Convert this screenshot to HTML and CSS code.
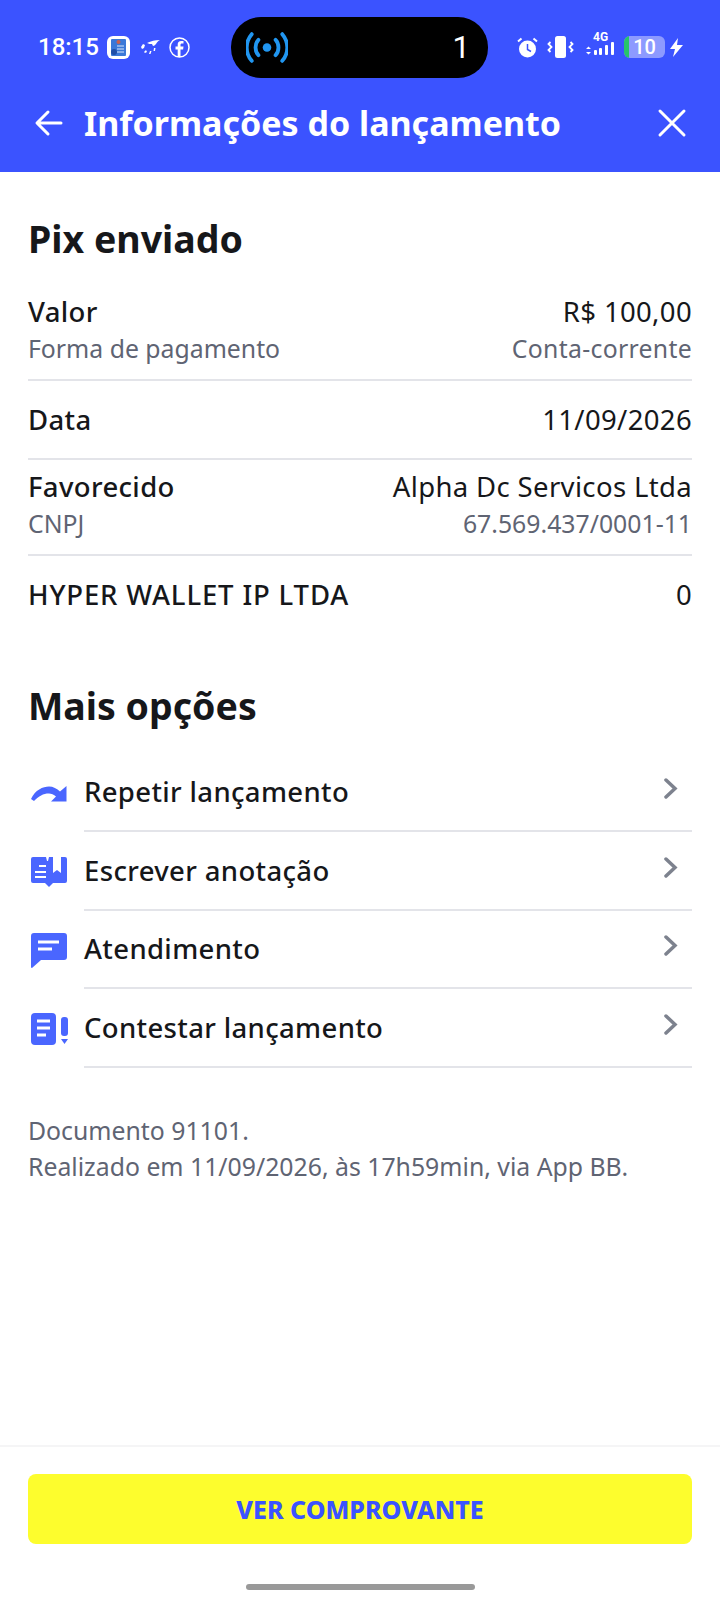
FILE: index.html
```html
<!DOCTYPE html>
<html lang="pt-BR">
<head>
    <meta charset="UTF-8">
    <meta name="viewport" content="width=device-width, initial-scale=1.0">
    <title>Informações do lançamento</title>
    <link rel="stylesheet" href="styles.css">
</head>
<body>
    <div class="tela">
        <header class="topo">
            <div class="status">
                <div class="status-esq">
                    <span class="hora">18:15</span>
                    <svg class="app-icone" width="23" height="23" viewBox="0 0 23 23">
                        <rect width="23" height="23" rx="6" fill="#fff"/>
                        <rect x="4" y="3" width="15" height="17" rx="1" fill="#3a78d8"/>
                        <circle cx="11.500" cy="6" r="2" fill="#c9604f"/>
                        <path d="M10 10h7M10 13h7M10 16h7" stroke="#d7e6fb" stroke-width="1"/>
                        <circle cx="7" cy="16" r="3" fill="#1f4fa8"/>
                    </svg>
                    <svg class="app-pena" width="19" height="15" viewBox="0 0 19 15">
                        <path d="M6 3c4-2 8-3 13-3-2 1-3 2-4 4-1 1-2 2-3 2l-1-2c-2 0-3 0-5-1z" fill="#fff"/>
                        <path d="M2 4L0 7l1 2 2-1 1-3zM5 10l-2 2 1 1 2-1zM9 11l-1 3h1.500l1-3zM13 8l-.5 3h1.500l.5-3z" fill="#fff"/>
                    </svg>
                    <svg width="21" height="21" viewBox="0 0 21 21">
                        <circle cx="10.500" cy="10.500" r="9.500" fill="none" stroke="#fff" stroke-width="1.500"/>
                        <path d="M11.500 20v-7.500h2.600l.4-3h-3V8c0-1 .4-1.500 1.500-1.500h1.500V4h-2.200C9.800 4 8.700 5.400 8.700 7.500v2H6.500v3h2.200V20z" fill="#fff"/>
                    </svg>
                </div>
                <div class="ilha">
                    <svg width="42" height="33" viewBox="0 0 44 34" fill="none" stroke="#2196f0" stroke-width="4" stroke-linecap="round">
                        <circle cx="22" cy="17" r="4.500" fill="#2196f0" stroke="none"/>
                        <path d="M13 9c-4 4-4 12 0 16M31 9c4 4 4 12 0 16"/>
                        <path d="M6 3C-1 11-1 23 6 31M38 3c7 8 7 20 0 28"/>
                    </svg>
                    <span class="ilha-num">1</span>
                </div>
                <div class="status-dir">
                    <svg width="21" height="21" viewBox="0 0 21 21">
                        <circle cx="10.500" cy="12" r="8.500" fill="#fff"/>
                        <path d="M10.500 7v5.500l3.500 2" stroke="#3b53ff" stroke-width="1.500" fill="none"/>
                        <path d="M1 4.500L4.500 1.500M20 4.500L16.500 1.500" stroke="#fff" stroke-width="2"/>
                    </svg>
                    <svg width="27" height="22" viewBox="0 0 27 22">
                        <rect x="8" y="0" width="11" height="22" rx="2.500" fill="#fff"/>
                        <path d="M3.500 6l-2 2 3 3-3 3 2 2M23.500 6l2 2-3 3 3 3-2 2" stroke="#fff" stroke-width="1.800" fill="none"/>
                    </svg>
                    <div class="senal">
                        <span class="senal-4g">4G</span>
                        <svg width="28" height="22" viewBox="0 0 28 22">
                            <path d="M0 13l2.500-2.500 2.500 2.500zM0 16l2.500 2.500 2.500-2.500z" fill="#fff"/>
                            <rect x="8" y="14" width="3" height="5" rx="1" fill="#fff"/>
                            <rect x="13" y="12" width="3" height="7" rx="1" fill="#fff"/>
                            <rect x="19" y="9" width="3" height="10" rx="1" fill="#fff"/>
                            <rect x="25" y="6" width="3" height="13" rx="1" fill="#fff"/>
                        </svg>
                    </div>
                    <div class="bateria">
                        <span class="bateria-nivel"></span>
                        <span class="bateria-num">10</span>
                    </div>
                    <svg class="raio" width="13" height="19" viewBox="0 0 13 19">
                        <path d="M8 0L0 11h5l-2 8 10-12H7z" fill="#fff"/>
                    </svg>
                </div>
            </div>
            <div class="barra">
                <svg width="30" height="30" viewBox="0 0 30 30" fill="none" stroke="#fff" stroke-width="3" stroke-linecap="round" stroke-linejoin="round">
                    <path d="M28 15H5M15 4L4 15l11 11"/>
                </svg>
                <h1>Informações do lançamento</h1>
                <svg width="30" height="30" viewBox="0 0 30 30" fill="none" stroke="#fff" stroke-width="3" stroke-linecap="round">
                    <path d="M3 3l24 24M27 3L3 27"/>
                </svg>
            </div>
        </header>

        <main class="conteudo">
            <h2>Pix enviado</h2>

            <section class="grupo primeiro">
                <div class="linha"><span class="forte">Valor</span><span class="normal">R$ 100,00</span></div>
                <div class="linha"><span class="sub">Forma de pagamento</span><span class="sub conta">Conta-corrente</span></div>
            </section>
            <section class="grupo simples">
                <div class="linha"><span class="forte">Data</span><span class="normal">11/09/2026</span></div>
            </section>
            <section class="grupo">
                <div class="linha"><span class="forte">Favorecido</span><span class="normal">Alpha Dc Servicos Ltda</span></div>
                <div class="linha"><span class="sub">CNPJ</span><span class="sub">67.569.437/0001-11</span></div>
            </section>
            <section class="grupo simples ultimo">
                <div class="linha"><span class="forte largo">HYPER WALLET IP LTDA</span><span class="normal">0</span></div>
            </section>

            <h2 class="mais">Mais opções</h2>

            <ul class="opcoes">
                <li>
                    <svg class="icone-repetir" width="36" height="16" viewBox="0 0 36 16">
                        <path d="M0 13C4 4 12 .500 18 .500c4 0 8 2 11 5L35.500 0v15.500H20l5-5c-2-2-5-3-7-3-6 0-10 2.500-15 7.500z" fill="#4a66ff"/>
                    </svg>
                    <span class="opcao-nome">Repetir lançamento</span>
                    <svg class="seta" width="14" height="21" viewBox="0 0 14 21"><path d="M2 2l9 8.500L2 19" fill="none" stroke="#7d828e" stroke-width="3.500" stroke-linecap="round"/></svg>
                </li>
                <li>
                    <svg width="36" height="30" viewBox="0 0 36 30">
                        <path d="M2 0h32a2 2 0 0 1 2 2v22a2 2 0 0 1-2 2H22l-4 4-4-4H2a2 2 0 0 1-2-2V2a2 2 0 0 1 2-2z" fill="#4a66ff"/>
                        <path d="M15 0h3l-1 4h-1zM22 0h8v16l-4-3-4 3z" fill="#fff"/>
                        <path d="M8 9h7M4 15h11M4 20h11" stroke="#fff" stroke-width="2"/>
                    </svg>
                    <span class="opcao-nome">Escrever anotação</span>
                    <svg class="seta" width="14" height="21" viewBox="0 0 14 21"><path d="M2 2l9 8.500L2 19" fill="none" stroke="#7d828e" stroke-width="3.500" stroke-linecap="round"/></svg>
                </li>
                <li>
                    <svg width="36" height="36" viewBox="0 0 36 36">
                        <path d="M3 0h30a3 3 0 0 1 3 3v21a3 3 0 0 1-3 3H10l-9 8a1 1 0 0 1-1-1V3a3 3 0 0 1 3-3z" fill="#4a66ff"/>
                        <path d="M7 9h21M7 16h14" stroke="#fff" stroke-width="3"/>
                    </svg>
                    <span class="opcao-nome">Atendimento</span>
                    <svg class="seta" width="14" height="21" viewBox="0 0 14 21"><path d="M2 2l9 8.500L2 19" fill="none" stroke="#7d828e" stroke-width="3.500" stroke-linecap="round"/></svg>
                </li>
                <li>
                    <svg class="icone-contestar" width="38" height="32" viewBox="0 0 38 32">
                        <rect width="25" height="32" rx="4" fill="#4a66ff"/>
                        <path d="M6 8h13M6 15h13M6 22h9" stroke="#fff" stroke-width="3"/>
                        <rect x="30" y="4" width="7" height="19" rx="3" fill="#4a66ff"/>
                        <path d="M30 26h7l-3.500 5z" fill="#4a66ff"/>
                    </svg>
                    <span class="opcao-nome">Contestar lançamento</span>
                    <svg class="seta" width="14" height="21" viewBox="0 0 14 21"><path d="M2 2l9 8.500L2 19" fill="none" stroke="#7d828e" stroke-width="3.500" stroke-linecap="round"/></svg>
                </li>
            </ul>

            <p class="rodape-info">Documento 91101.<br>Realizado em 11/09/2026, às 17h59min, via App BB.</p>
        </main>

        <footer class="rodape">
            <button class="botao">VER COMPROVANTE</button>
            <div class="home"></div>
        </footer>
    </div>
</body>
</html>
```

FILE: styles.css
```css
* {
    box-sizing: border-box;
}
body {
    margin: 0;
    font-family: "Noto Sans", "Lato", sans-serif;
    background-color: #fff;
    color: #16171a;
}
.tela {
    width: 720px;
    height: 1600px;
    display: flex;
    flex-direction: column;
}
.topo {
    height: 172px;
    background-color: #3b53ff;
    color: #fff;
}
.status {
    height: 96px;
    padding: 17px 0 0 38px;
    display: flex;
    align-items: flex-start;
}
.status-esq {
    width: 193px;
    height: 60px;
    display: flex;
    align-items: center;
    font-family: "Roboto", sans-serif;
}
.hora {
    width: 69px;
    font-size: 24px;
    font-weight: 500;
}
.app-pena {
    margin-left: 11px;
    margin-right: 9px;
}
.ilha {
    width: 257px;
    height: 61px;
    background-color: #000;
    border-radius: 30px;
    display: flex;
    align-items: center;
    justify-content: space-between;
    padding: 0 18px 0 15px;
}
.ilha-num {
    font-family: "Roboto", sans-serif;
    font-size: 31px;
}
.status-dir {
    height: 60px;
    margin-left: 29px;
    display: flex;
    align-items: center;
}
.status-dir svg {
    display: block;
}
.status-dir > svg:nth-child(2) {
    margin-left: 9px;
}
.senal {
    position: relative;
    margin-left: 12px;
}
.senal-4g {
    position: absolute;
    left: 7px;
    top: -6px;
    font-family: "Roboto", sans-serif;
    font-size: 12px;
    font-weight: 700;
}
.bateria {
    position: relative;
    width: 41px;
    height: 22px;
    margin-left: 10px;
    border-radius: 6px;
    background-color: #8d9aff;
    overflow: hidden;
    text-align: center;
    font-family: "Roboto", sans-serif;
    font-size: 20px;
    line-height: 22px;
    font-weight: 500;
}
.bateria-nivel {
    position: absolute;
    left: 0;
    top: 0;
    bottom: 0;
    width: 5px;
    background-color: #27c46b;
}
.raio {
    margin-left: 5px;
}
.barra {
    height: 60px;
    padding: 0 33px 6px 33px;
    display: flex;
    align-items: center;
    justify-content: space-between;
}
.barra h1 {
    flex: 1;
    margin: 0 0 0 21px;
    font-size: 34px;
    font-weight: 700;
}
.conteudo {
    flex: 1;
    padding: 0 28px;
}
h2 {
    margin: 45px 0 33px;
    font-size: 37.5px;
    line-height: 44px;
    font-weight: 700;
}
.grupo {
    border-bottom: 2px solid #e3e4e9;
    padding: 9px 0 13px;
}
.grupo.primeiro {
    padding: 0 0 13px;
}
.grupo.simples {
    padding: 21px 0 20px;
}
.grupo.ultimo {
    border-bottom: none;
}
.linha {
    display: flex;
    justify-content: space-between;
    line-height: 36px;
}
.forte {
    font-size: 27.5px;
    font-weight: 500;
    letter-spacing: .35px;
}
.forte.largo {
    letter-spacing: .85px;
}
.normal {
    font-size: 27.5px;
    letter-spacing: .35px;
}
.sub {
    font-size: 24.8px;
    color: #5f6473;
}
.sub.conta {
    letter-spacing: .3px;
}
h2.mais {
    margin: 51px 0 25px;
}
.opcoes {
    list-style: none;
    margin: 0;
    padding: 0;
}
.opcoes li {
    height: 78.5px;
    display: grid;
    grid-template-columns: 56px 1fr;
    align-items: center;
    position: relative;
}
.opcoes li > svg:first-child {
    margin: 2px 0 0 3px;
}
.opcoes li > .icone-repetir {
    margin-top: -4px;
}
.opcoes li > .icone-contestar {
    margin-left: 2px;
}
.opcao-nome {
    height: 100%;
    border-bottom: 2px solid #e3e4e9;
    font-size: 27.5px;
    font-weight: 500;
    letter-spacing: .35px;
    line-height: 77px;
}
.seta {
    position: absolute;
    right: 14px;
    top: 25px;
}
.rodape-info {
    margin: 45px 0 0;
    font-size: 24.8px;
    line-height: 36px;
    color: #5f6473;
}
.rodape {
    height: 155px;
    border-top: 2px solid #f5f5f6;
    padding: 27px 28px 0;
}
.botao {
    display: block;
    width: 100%;
    height: 70px;
    border: none;
    border-radius: 8px;
    background-color: #fdfd2d;
    color: #3b53ff;
    font-family: "Noto Sans", sans-serif;
    font-size: 25px;
    font-weight: 800;
}
.home {
    width: 229px;
    height: 6px;
    margin: 40px auto 0;
    border-radius: 3px;
    background-color: #999;
}
```
